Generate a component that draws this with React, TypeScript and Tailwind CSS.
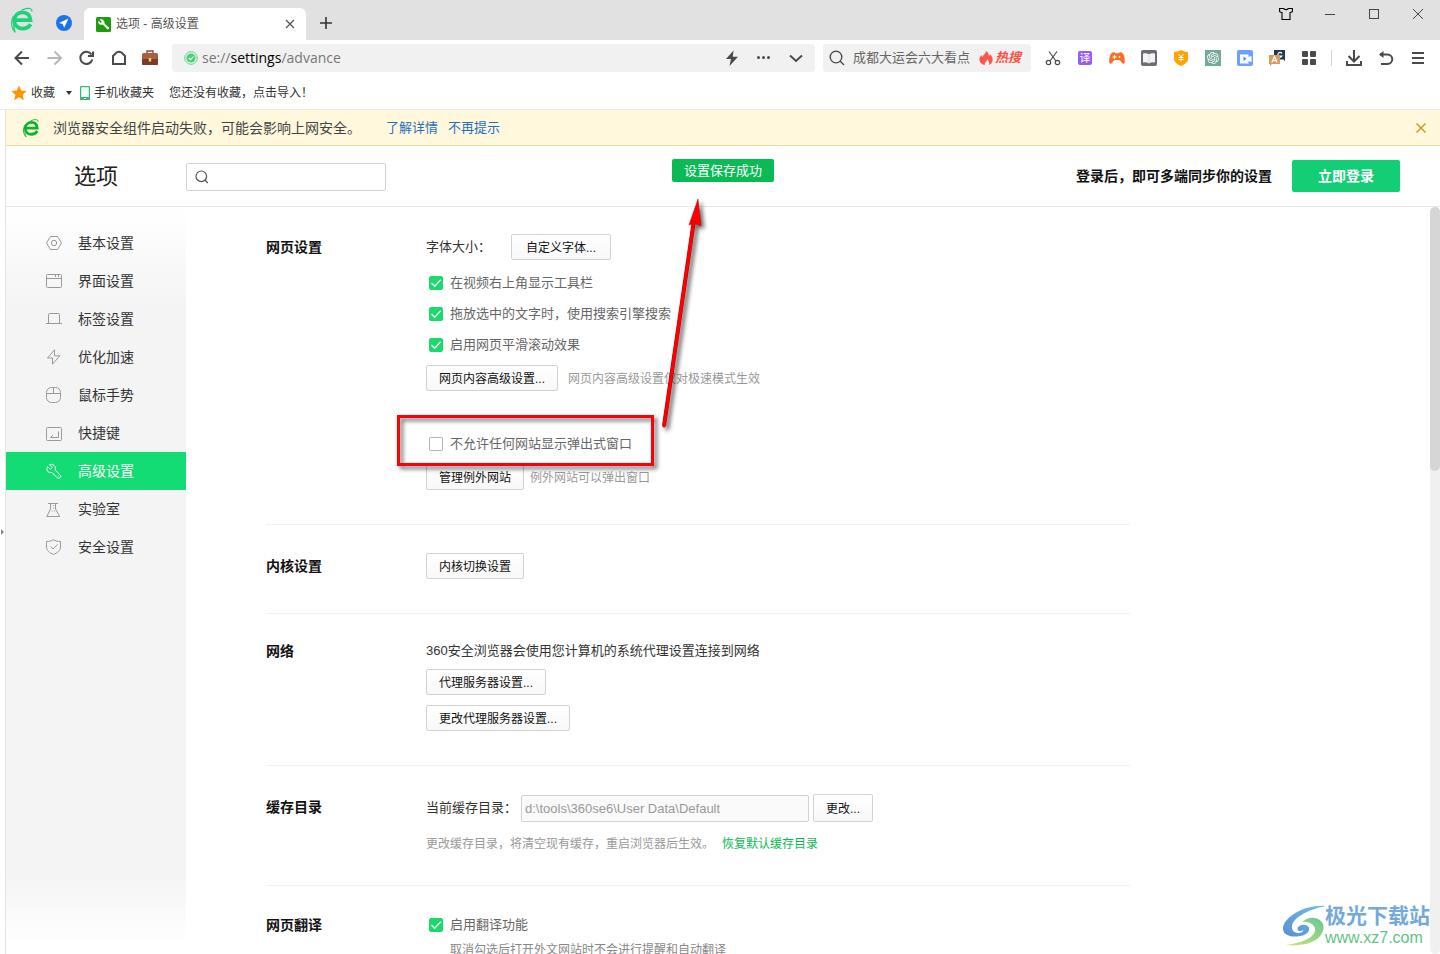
import type { ReactNode } from "react";
import { SiOpenai } from "react-icons/si";

type NavItem = { label: string; icon: ReactNode; active?: boolean };

function BrowserLogo({ className, color }: { className: string; color: string }) {
  return (
    <svg viewBox="0 0 22 26" className={className} fill="none" stroke={color}>
      <path
        d="M5 13.200H19.500C19.200 8.300 16 5.300 11.600 5.300C6.600 5.300 3.200 9 3.200 13.600C3.200 18.400 6.900 21.600 11.600 21.600C15.200 21.600 18 20 19.600 17.200"
        strokeWidth="3.800"
      />
      <path
        d="M20.800 4.500C21.500 1 16 .3 10.500 3.300M2.500 9C.6 12.500.2 16.500 1 19.500C1.600 22 2.600 23.800 4.200 25.400C3 22.500 2.600 19.500 2.700 16"
        strokeWidth="1.200"
      />
    </svg>
  );
}

const navItems: NavItem[] = [
  {
    label: "基本设置",
    icon: (
      <>
        <path d="M4.500 1.500h7l4 6.500-4 6.500h-7L.5 8z" />
        <circle cx="8" cy="8" r="2.700" />
      </>
    ),
  },
  {
    label: "界面设置",
    icon: (
      <>
        <rect x=".5" y="1.500" width="15" height="13" rx="1" />
        <path d="M.5 5.500h15M9.500 1.500v2.500M12.500 1.500v2.500" />
      </>
    ),
  },
  {
    label: "标签设置",
    icon: <path d="M0 12.500h16M2.500 12.500v-9q0-1 1-1h9q1 0 1 1v9" />,
  },
  {
    label: "优化加速",
    icon: <path d="M8.500.8 1.500 9h5v6.200L13.800 6.800H8.500z" />,
  },
  {
    label: "鼠标手势",
    icon: (
      <>
        <rect x=".5" y=".5" width="14" height="15" rx="5" />
        <path d="M.5 6.500h14M7.500.5v6" />
      </>
    ),
  },
  {
    label: "快捷键",
    icon: (
      <>
        <rect x=".5" y="2.500" width="15" height="13" rx="1" />
        <path d="M12.500 6.500v6H4.500l2.500-2.300" />
      </>
    ),
  },
  {
    label: "高级设置",
    active: true,
    icon: (
      <>
        <path d="M3.500 1.700 6.300 4.500 4.500 6.300 1.500 3.600C.2 6 .9 8.400 3 9.300c1.200.5 2.200.3 3 .2l4.800 4.900c1.200 1.200 2.500 1.200 3.400.3.900-.9.800-2.200-.3-3.200L9.300 7.200c.3-1.700.2-3.500-1.300-4.800C6.600 1.200 4.900 1.100 3.500 1.700z" />
        <path d="M12.300 12.800h.8" />
      </>
    ),
  },
  {
    label: "实验室",
    icon: (
      <>
        <path d="M2 2.500h10M4.500 2.500V8L.8 15.500h12.900L9.500 8V2.500" />
        <path d="M7 4.500h1M7 7h1M5.500 10h1M8 10h1" />
      </>
    ),
  },
  {
    label: "安全设置",
    icon: (
      <>
        <path d="M7.500.7c2 1.300 4.300 1.800 7 1.800V8c0 3.500-3 6-7 7.400C3.500 14 .5 11.500.5 8V2.500c2.700 0 5-.5 7-1.800z" />
        <path d="m4.500 7.500 2.500 2.500 4.500-4.500" />
      </>
    ),
  },
];

function ToolButton({ label, children }: { label: string; children: ReactNode }) {
  return (
    <button type="button" aria-label={label} className="flex h-8 w-8 shrink-0 items-center justify-center text-[#4a4a4a]">
      {children}
    </button>
  );
}

function LineIcon({ children, width = 2 }: { children: ReactNode; width?: number }) {
  return (
    <svg viewBox="0 0 16 16" className="size-4" fill="none" stroke="currentColor" strokeWidth={width}>
      {children}
    </svg>
  );
}

function PlainButton({ children, className = "h-[26px]" }: { children: ReactNode; className?: string }) {
  return (
    <button
      type="button"
      className={`shrink-0 rounded-xs border border-[#d2d2d2] bg-linear-to-b from-white to-[#f8f8f8] px-3 pt-0.5 text-xs whitespace-nowrap text-[#111] ${className}`}
    >
      {children}
    </button>
  );
}

function CheckRow({ label, checked = false }: { label: string; checked?: boolean }) {
  return (
    <label className="flex h-[31px] w-fit items-center gap-[7px] pl-[3px] text-[13px] text-[#666]">
      <span className="grid size-3.5">
        <input
          type="checkbox"
          defaultChecked={checked}
          className="peer col-start-1 row-start-1 size-3.5 appearance-none rounded-xs border border-[#b4b4b4] bg-white checked:border-[#1bd96a] checked:bg-[#1bd96a]"
        />
        <svg
          viewBox="0 0 14 14"
          className="pointer-events-none col-start-1 row-start-1 hidden size-3.5 peer-checked:block"
          fill="none"
          stroke="#fff"
          strokeWidth="1.300"
        >
          <path d="m2.500 7 3.200 3.200 6-6.400" />
        </svg>
      </span>
      {label}
    </label>
  );
}

function Section({ title, className, children }: { title: string; className: string; children: ReactNode }) {
  return (
    <section className={`flex max-w-[864px] border-b border-[#f0f0f0] ${className}`}>
      <h2 className="h-[26px] w-40 shrink-0 text-sm leading-[26px] font-bold text-[#111]">{title}</h2>
      <div className="min-w-0 flex-1">{children}</div>
    </section>
  );
}

function TitleBar() {
  return (
    <div className="flex h-10 items-end bg-[#e1e1e1]">
      <div className="flex h-10 w-[84px] shrink-0 items-center gap-[23px] pl-[11px]">
        <BrowserLogo className="h-[26px] w-[22px]" color="#1cd37c" />
        <svg viewBox="0 0 16 16" className="mt-1.5 size-4">
          <circle cx="8" cy="8" r="8" fill="#1a73ee" />
          <path d="M12.500 3.500 3 8l3.700 1 1.500 3.800z" fill="#fff" />
        </svg>
      </div>
      <div className="flex h-8 w-[222px] items-center rounded-t-md bg-white pl-3">
        <svg viewBox="0 0 15 15" className="size-[15px]">
          <rect width="15" height="15" rx="1.500" fill="#1f9b0e" />
          <path
            d="M3.500 2.500 5.800 4.800 4.800 6 2.400 3.700C1.700 6 3.200 8 5.500 7.800L6.700 7.500 11 12q1.300.8 1.900-.2.500-.8-.2-1.600L8.500 6.500C9 3.600 6.300 1.400 3.500 2.500z"
            fill="#fff"
          />
        </svg>
        <span className="ml-[5px] flex-1 text-xs text-[#555]">选项 - 高级设置</span>
        <button type="button" aria-label="关闭标签页" className="mr-2.5 text-[#555]">
          <svg viewBox="0 0 12 12" className="size-3" fill="none" stroke="currentColor" strokeWidth="1.300">
            <path d="m2 2 8 8M10 2l-8 8" />
          </svg>
        </button>
      </div>
      <button type="button" aria-label="新建标签页" className="flex h-[34px] w-10 items-center justify-center text-[#333]">
        <svg viewBox="0 0 12 12" className="size-3" stroke="currentColor" strokeWidth="1.600">
          <path d="M6 0v12M0 6h12" />
        </svg>
      </button>
      <div className="ml-auto flex h-10 items-start text-[#444]">
        <button type="button" aria-label="皮肤" className="flex h-7 w-11 items-center justify-center text-black">
          <svg viewBox="0 0 14 14" className="size-3.5" fill="none" stroke="currentColor" strokeWidth="1.100">
            <path d="M4.500 1.500H.6v3.200l2.400 1v6.800h8V5.700l2.400-1V1.500H9.500q-2.500 2.200-5 0z" />
          </svg>
        </button>
        <button type="button" aria-label="最小化" className="flex h-7 w-11 items-center justify-center">
          <svg viewBox="0 0 10 10" className="size-2.5" stroke="currentColor">
            <path d="M0 5.500h10" />
          </svg>
        </button>
        <button type="button" aria-label="最大化" className="flex h-7 w-11 items-center justify-center">
          <svg viewBox="0 0 10 10" className="size-2.5" fill="none" stroke="currentColor">
            <rect x=".5" y=".5" width="9" height="9" />
          </svg>
        </button>
        <button type="button" aria-label="关闭" className="flex h-7 w-11 items-center justify-center">
          <svg viewBox="0 0 10 10" className="size-2.5" fill="none" stroke="currentColor">
            <path d="m0 0 10 10M10 0 0 10" />
          </svg>
        </button>
      </div>
    </div>
  );
}

function Toolbar() {
  return (
    <div className="flex h-9 items-center bg-white px-1.5">
      <ToolButton label="后退">
        <LineIcon>
          <path d="M15 8H2M8 1.500 1.500 8 8 14.500" />
        </LineIcon>
      </ToolButton>
      <ToolButton label="前进">
        <span className="text-[#b9b9b9]">
          <LineIcon>
            <path d="M1.500 8h13M8.500 1.500 15 8l-6.500 6.500" />
          </LineIcon>
        </span>
      </ToolButton>
      <ToolButton label="刷新">
        <LineIcon>
          <path d="M14.300 9.500A6.100 6.100 0 1 1 13.500 4.500M15 1.500V6H10" />
        </LineIcon>
      </ToolButton>
      <ToolButton label="主页">
        <LineIcon>
          <path d="M3 14V6l3.500-3.500Q9 1 11.500 2.500L15 6v8z" />
        </LineIcon>
      </ToolButton>
      <ToolButton label="工具箱">
        <svg viewBox="0 0 16 16" className="size-4">
          <path d="M5 3.500V1h6v2.500" fill="none" stroke="#8a4a32" strokeWidth="1.400" />
          <rect y="3" width="16" height="12" rx="1.500" fill="#a85f42" />
          <path d="M0 9h16v4.500q0 1.500-1.500 1.500h-13Q0 15 0 13.500z" fill="#7a3c28" />
          <rect x="6.800" y="8" width="2.400" height="3.500" rx=".6" fill="#f3d46b" />
        </svg>
      </ToolButton>

      <div className="ml-1.5 flex h-7 min-w-0 flex-1 items-center rounded-sm bg-[#f1f1f1] pl-3">
        <svg viewBox="0 0 14 14" className="size-3.5" fill="none">
          <circle cx="7" cy="7" r="6.300" stroke="#5bd883" />
          <circle cx="7" cy="7" r="4.600" fill="#4bd078" />
          <path d="m4.800 7 1.700 1.700 3-3" stroke="#fff" strokeWidth="1.200" />
        </svg>
        <span className="ml-1 flex-1 font-['Open_Sans',sans-serif] text-sm text-[#777]">
          se://<span className="text-black">settings</span>/advance
        </span>
        <ToolButton label="极速模式">
          <svg viewBox="0 0 16 16" className="size-4" fill="currentColor">
            <path d="M9.500.5 2 9h5l-1.500 7L14 6.800H8.800z" />
          </svg>
        </ToolButton>
        <ToolButton label="更多">
          <svg viewBox="0 0 16 16" className="size-4" fill="currentColor">
            <circle cx="2.500" cy="7.500" r="1.500" />
            <circle cx="7.500" cy="7.500" r="1.500" />
            <circle cx="12.500" cy="7.500" r="1.500" />
          </svg>
        </ToolButton>
        <ToolButton label="展开">
          <LineIcon>
            <path d="m2 5.500 6 5.500 6-5.500" />
          </LineIcon>
        </ToolButton>
        <span className="w-[3px]" />
      </div>

      <div className="mr-1.5 ml-2 flex h-7 w-52 shrink-0 items-center rounded-sm bg-[#f1f1f1] pl-1.5">
        <svg viewBox="0 0 16 16" className="size-4" fill="none" stroke="#444" strokeWidth="1.300">
          <circle cx="7" cy="7" r="5.800" />
          <path d="m11 11 4 4" />
        </svg>
        <input
          type="text"
          aria-label="搜索"
          placeholder="成都大运会六大看点"
          className="ml-2 w-[118px] bg-transparent text-[13px] placeholder:text-[#666] focus:outline-none"
        />
        <svg viewBox="0 0 14 14" className="ml-2 size-3.5" fill="#ff5548">
          <path d="M7 0c2.500 1.500 3 3.500 2.800 5.200.7-.4 1.100-1 1.200-1.900 1.900 1.700 2.800 3.800 2.600 6-.2 2.300-1.500 4-3.600 4.700.8-2-.2-4.200-2-5.800.1 1.500-.6 2.200-1.300 2.800-1 .9-1.200 1.900-.7 3C2.800 13.500.6 11.700.4 9 .3 7 1.300 5.500 2.500 4c.1 1 .4 1.700 1 2.200C4.200 3.500 6.800 3 7 0z" />
        </svg>
        <span className="ml-0.5 text-[13px] font-bold text-[#ff4d43] italic">热搜</span>
      </div>

      <ToolButton label="截图">
        <LineIcon width={1.2}>
          <path d="M4 1.500 11 11M12 1.500 5 11" />
          <circle cx="3.500" cy="12.500" r="2.200" />
          <circle cx="12.500" cy="12.500" r="2.200" />
        </LineIcon>
      </ToolButton>
      <ToolButton label="翻译">
        <span className="flex size-3.5 items-center justify-center rounded-xs bg-[#965df5] text-[11px] leading-none text-white">
          译
        </span>
      </ToolButton>
      <ToolButton label="游戏">
        <svg viewBox="0 0 16 16" className="size-4" fill="none">
          <path
            d="M.2 12C0 7.500 1 4 3 2.700 4.500 1.800 5.800 2.200 6.800 3.200h2.400c1-1 2.300-1.400 3.800-.5 2 1.300 3 4.800 2.800 9.300-.2 2.200-2 2.200-3 .8-1-1.500-1.800-2.800-3.300-2.800h-3c-1.500 0-2.300 1.300-3.300 2.800-1 1.400-2.800 1.400-3-.8z"
            fill="#fb6e22"
          />
          <path d="M3.500 7h4M5.500 5v4" stroke="#fff" strokeWidth="1.200" />
          <circle cx="10.500" cy="7" r=".9" fill="#fff" />
        </svg>
      </ToolButton>
      <ToolButton label="阅读">
        <svg viewBox="0 0 16 16" className="size-4">
          <rect width="16" height="16" rx="2" fill="#6c6d74" />
          <path d="M2 3.500q3-.8 6 .7 3-1.500 6-.7v9q-3-.6-6 .8-3-1.400-6-.8z" fill="#f4f4f4" />
          <path d="M8 4v9.500" stroke="#dcdce0" />
        </svg>
      </ToolButton>
      <ToolButton label="省钱">
        <svg viewBox="0 0 16 16" className="size-4">
          <path d="M8 0q3 2 7 2v7q0 4-7 7-7-3-7-7V2q4 0 7-2z" fill="#ffa400" />
          <path d="m5.500 4 2.500 3 2.500-3M5.500 7.500h5M5.500 9.500h5M8 7v4.500" fill="none" stroke="#fff" />
        </svg>
      </ToolButton>
      <ToolButton label="AI 助手">
        <span className="flex size-4 items-center justify-center bg-[#74a89a] text-white">
          <SiOpenai className="size-3" />
        </span>
      </ToolButton>
      <ToolButton label="录屏">
        <svg viewBox="0 0 16 16" className="size-4">
          <rect width="16" height="16" rx="2" fill="#6ba1fb" />
          <path d="M3 4.500h8.500V7l3-1v6l-3-1v2.500H3z" fill="#fff" />
          <path d="m6.500 6.500 3 2.300-3 2.200z" fill="#4c86f4" />
        </svg>
      </ToolButton>
      <ToolButton label="网页翻译">
        <svg viewBox="0 0 16 16" className="size-4">
          <path d="M5 0h11v11l-1.500-1.500H5z" fill="#1f3a54" />
          <path d="M13 3.500q-2-2-3.500-.3-1.500 2 0 3.800 2 1 3.500-1h-2" fill="none" stroke="#fff" strokeWidth="1.200" />
          <path d="M0 5h11v9H3L1 16v-2H0z" fill="#d99a5e" />
          <path d="m2.800 12.500 2.700-6 2.700 6M3.800 10.700h3.500" fill="none" stroke="#fff" strokeWidth="1.200" />
        </svg>
      </ToolButton>
      <ToolButton label="扩展中心">
        <svg viewBox="0 0 16 16" className="size-4" fill="currentColor">
          <rect x="1" y="1" width="6" height="6" rx="1" />
          <rect x="9" y="1" width="6" height="6" rx="1" />
          <rect x="1" y="9" width="6" height="6" rx="1" />
          <rect x="9" y="9" width="6" height="6" rx="1" />
        </svg>
      </ToolButton>
      <span className="mx-1.5 h-4 w-px shrink-0 bg-[#d4d4d4]" />
      <ToolButton label="下载">
        <LineIcon>
          <path d="M8 0v11M2.500 6 8 11.500 13.500 6M1 11v4h14v-4" />
        </LineIcon>
      </ToolButton>
      <ToolButton label="恢复">
        <LineIcon>
          <path d="M2 4.500h7.500a4.700 4.700 0 0 1 0 9.500H3" />
          <path d="M5.500 1 1 4.500 5.500 8z" fill="currentColor" stroke="none" />
        </LineIcon>
      </ToolButton>
      <ToolButton label="菜单">
        <LineIcon>
          <path d="M2 3h12M2 8h12M2 13h12" />
        </LineIcon>
      </ToolButton>
    </div>
  );
}

function BookmarkBar() {
  return (
    <div className="flex h-[34px] items-center border-b border-[#ececec] bg-white pl-[11px] text-xs text-[#333]">
      <button type="button" className="flex items-center gap-1">
        <svg viewBox="0 0 16 16" className="size-4" fill="#fb9507">
          <path d="m8 .5 2.200 5 5.600.5-4.200 3.700 1.300 5.500L8 12.300l-4.900 2.900 1.300-5.500L.2 6l5.600-.5z" />
        </svg>
        收藏
      </button>
      <button type="button" aria-label="收藏菜单" className="mr-[7px] ml-2.5">
        <svg viewBox="0 0 8 4" className="h-1 w-2" fill="#333">
          <path d="M1 0h6L4 4z" />
        </svg>
      </button>
      <button type="button" className="flex items-center gap-1">
        <svg viewBox="0 0 10 14" className="h-3.5 w-2.5">
          <rect x=".6" y=".6" width="8.800" height="12.800" rx=".6" fill="#f4fff8" stroke="#37b877" strokeWidth="1.200" />
          <path d="M0 11h10v3H0z" fill="#37b877" />
          <path d="M4 12.500h2" stroke="#fff" />
        </svg>
        手机收藏夹
      </button>
      <button type="button" className="ml-[15px]">
        您还没有收藏，点击导入！
      </button>
    </div>
  );
}

function Watermark() {
  return (
    <div className="pointer-events-none absolute right-2.5 bottom-1.5 flex items-center">
      <svg viewBox="0 0 44 42" className="h-[42px] w-11">
        <defs>
          <linearGradient id="swirlBlue" x1="1" y1="0" x2="0" y2="1">
            <stop offset="0" stopColor="#6fc0ee" />
            <stop offset="1" stopColor="#5a8fd0" />
          </linearGradient>
          <linearGradient id="swirlGreen" x1="1" y1="0" x2="0" y2="1">
            <stop offset="0" stopColor="#68c59a" />
            <stop offset="1" stopColor="#cfe56c" />
          </linearGradient>
        </defs>
        <path
          d="M43 1C22-1 1 12 0 23c-.5 9 13 10 21 7 5-2 7-7 3-9.500-4-2-10 .5-9.500 4 .5 2 4 2 6 .5-1 4-9 4-11 0C6 17 18 6 43 1z"
          fill="url(#swirlBlue)"
        />
        <path d="M19 17c9-9 25-3 21 9C37 36 22 42 3 40c14-2 27-6 29-14 1-6-6-10-13-9z" fill="url(#swirlGreen)" />
      </svg>
      <div className="-ml-0.5">
        <p className="text-[21px] leading-6 font-bold text-[#75a9dc]">极光下载站</p>
        <p className="font-['Liberation_Sans',sans-serif] text-base leading-5 font-medium text-[#5fc484]">www.xz7.com</p>
      </div>
    </div>
  );
}

function PointerArrow() {
  return (
    <svg
      viewBox="0 0 60 250"
      className="pointer-events-none absolute top-20 left-[644px] h-[250px] w-[60px] overflow-visible drop-shadow-[3px_3px_2px_rgba(0,0,0,0.6)]"
    >
      <path d="m48 9-9 26 5-2 7 3z" fill="#f00" stroke="#c00000" strokeWidth=".5" />
      <path d="M14 236 44 30" stroke="#b00000" strokeWidth="4" />
      <path d="M14 236 44 30" stroke="#f00" strokeWidth="3" strokeLinecap="round" />
    </svg>
  );
}

export default function App() {
  return (
    <div className="flex h-screen flex-col overflow-hidden bg-white font-['Liberation_Sans','Noto_Sans_CJK_SC',sans-serif]">
      <TitleBar />
      <Toolbar />
      <BookmarkBar />

      <div className="flex min-h-0 flex-1">
        <div className="flex w-1.5 shrink-0 items-center border-r border-[#e2e2e2]">
          <svg viewBox="0 0 4 6" className="ml-px h-1.5 w-1" fill="#888">
            <path d="M0 0v6l3-3z" />
          </svg>
        </div>

        <div className="relative flex min-w-0 flex-1 flex-col">
          <div className="flex h-9 shrink-0 items-center border-b border-[#f5dc98] bg-[#fff8dc] pl-[17px]">
            <BrowserLogo className="h-5 w-4" color="#0db32f" />
            <span className="ml-3.5 text-sm text-[#444]">浏览器安全组件启动失败，可能会影响上网安全。</span>
            <a href="#detail" className="ml-[25px] text-[13px] text-[#1f6fc4]">
              了解详情
            </a>
            <a href="#dismiss" className="ml-2.5 text-[13px] text-[#1f6fc4]">
              不再提示
            </a>
            <button type="button" aria-label="关闭提示" className="mr-3.5 ml-auto text-[#c9961a]">
              <svg viewBox="0 0 10 10" className="size-2.5" fill="none" stroke="currentColor" strokeWidth="1.400">
                <path d="m.5.5 9 9M9.500.5l-9 9" />
              </svg>
            </button>
          </div>

          <header className="relative flex h-[61px] shrink-0 items-center border-b border-[#e8e8e8]">
            <h1 className="w-[180px] pl-[68px] text-[22px] text-[#222]">选项</h1>
            <div className="mt-0.5 flex h-7 w-[200px] items-center rounded-xs border border-[#d2d2d2] bg-white pl-2">
              <svg viewBox="0 0 14 14" className="size-3.5" fill="none" stroke="#555" strokeWidth="1.200">
                <circle cx="6.300" cy="6.300" r="5.300" />
                <path d="m9.800 10 3 3" />
              </svg>
              <input type="text" aria-label="搜索设置" className="ml-2 min-w-0 flex-1 text-[13px] focus:outline-none" />
            </div>
            <div
              role="status"
              className="absolute top-[13px] left-1/2 h-[23px] -translate-x-1/2 rounded-xs bg-[#0abb55] px-3 text-[13px] leading-[23px] whitespace-nowrap text-white"
            >
              设置保存成功
            </div>
            <p className="ml-auto text-sm font-bold text-[#111]">登录后，即可多端同步你的设置</p>
            <button type="button" className="mr-10 ml-5 h-8 w-[108px] rounded-xs bg-[#13ce75] text-sm font-bold text-white">
              立即登录
            </button>
          </header>

          <div className="flex min-h-0 flex-1">
            <nav className="flex w-[180px] shrink-0 flex-col bg-[#f4f4f4] bg-linear-to-b from-white to-[#f4f4f4] to-[100px] pt-[17px]">
              {navItems.map((item) => (
                <a
                  key={item.label}
                  href={`#${item.label}`}
                  className={`flex h-[38px] shrink-0 items-center gap-4 pl-10 text-sm ${
                    item.active ? "bg-[#12dc73] text-white" : "text-[#333]"
                  }`}
                >
                  <svg
                    viewBox="0 0 16 16"
                    className={`size-4 ${item.active ? "text-white" : "text-[#999]"}`}
                    fill="none"
                    stroke="currentColor"
                  >
                    {item.icon}
                  </svg>
                  {item.label}
                </a>
              ))}
              <div className="mt-auto h-20 bg-linear-to-b from-[#f4f4f4] to-white to-[70px]" />
            </nav>

            <main className="min-w-0 flex-1 overflow-hidden pl-20">
              <Section title="网页设置" className="pt-[27px] pb-[34px]">
                <div className="flex items-center text-[13px] text-[#333]">
                  <span className="w-[85px]">字体大小：</span>
                  <PlainButton className="h-[26px] w-[100px]">自定义字体...</PlainButton>
                </div>
                <div className="mt-[7px]">
                  <CheckRow label="在视频右上角显示工具栏" checked />
                  <CheckRow label="拖放选中的文字时，使用搜索引擎搜索" checked />
                  <CheckRow label="启用网页平滑滚动效果" checked />
                </div>
                <div className="mt-[5px] flex items-center gap-2.5 text-xs text-[#999]">
                  <PlainButton className="h-[26px] w-[132px]">网页内容高级设置...</PlainButton>
                  <span className="pt-0.5">网页内容高级设置仅对极速模式生效</span>
                </div>
                <div className="relative mt-[37px]">
                  <CheckRow label="不允许任何网站显示弹出式窗口" />
                  <div className="pointer-events-none absolute -top-[13px] -left-[29px] z-10 h-[51px] w-[257px] border-3 border-[#fb0007] drop-shadow-[3px_3px_2px_rgba(0,0,0,0.6)]" />
                </div>
                <div className="mt-[5px] flex items-center gap-1.5 text-xs text-[#999]">
                  <PlainButton>管理例外网站</PlainButton>
                  <span className="pt-0.5">例外网站可以弹出窗口</span>
                </div>
              </Section>

              <Section title="内核设置" className="pt-7 pb-[34px]">
                <PlainButton>内核切换设置</PlainButton>
              </Section>

              <Section title="网络" className="pt-6 pb-[34px]">
                <p className="mt-[3px] text-[13px] leading-5 text-[#333]">360安全浏览器会使用您计算机的系统代理设置连接到网络</p>
                <div className="mt-2 flex flex-col items-start gap-2.5">
                  <PlainButton className="h-[26px] w-[120px]">代理服务器设置...</PlainButton>
                  <PlainButton className="h-[26px] w-36">更改代理服务器设置...</PlainButton>
                </div>
              </Section>

              <Section title="缓存目录" className="pt-7 pb-[31px]">
                <div className="flex items-center text-[13px] text-[#333]">
                  <label htmlFor="cache-dir" className="w-[95px]">
                    当前缓存目录：
                  </label>
                  <input
                    id="cache-dir"
                    type="text"
                    readOnly
                    defaultValue="d:\tools\360se6\User Data\Default"
                    className="mr-1 h-[27px] w-72 rounded-xs border border-[#d2d2d2] bg-[#fafafa] px-[3px] text-[13px] text-[#999] focus:outline-none"
                  />
                  <PlainButton className="h-7 w-[60px]">更改...</PlainButton>
                </div>
                <p className="mt-3 text-xs leading-5 text-[#999]">
                  更改缓存目录，将清空现有缓存，重启浏览器后生效。
                  <a href="#reset-cache" className="ml-2 text-[#0abb55]">
                    恢复默认缓存目录
                  </a>
                </p>
              </Section>

              <Section title="网页翻译" className="pt-[26px]">
                <div className="flex h-[26px] items-center">
                  <CheckRow label="启用翻译功能" checked />
                </div>
                <p className="mt-1 pl-6 text-xs leading-4 text-[#888]">取消勾选后打开外文网站时不会进行提醒和自动翻译</p>
              </Section>
            </main>

            <div className="w-2.5 shrink-0 rounded-full bg-[#f0f0f0]">
              <div className="h-[264px] rounded-full bg-[#d6d6d6]" />
            </div>
          </div>

          <PointerArrow />
          <Watermark />
        </div>
      </div>
    </div>
  );
}
